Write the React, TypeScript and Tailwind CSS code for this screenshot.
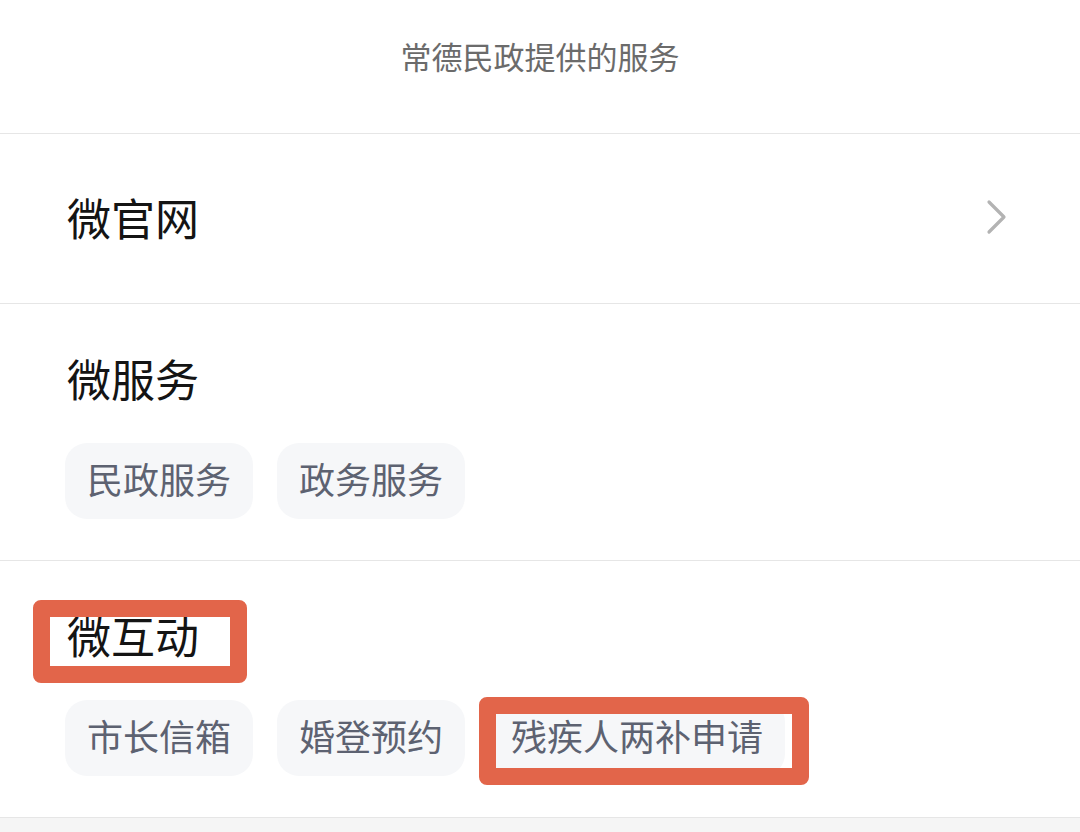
import React from 'react';

const font = { fontFamily: '"Noto Sans CJK SC", "Noto Sans", sans-serif' };

interface ChipProps {
  label: string;
  marked?: boolean;
}

function Chip({ label, marked }: ChipProps) {
  return (
    <div className="relative">
      <div className="h-[76px] px-[22px] pb-[6px] flex items-center rounded-[22px] bg-[#f6f7f9] text-[36px] leading-[36px] text-[#5d6271]">
        {label}
      </div>
      {/* annotation box */}
      {marked && (
        <div className="absolute left-[-10px] top-[-3px] w-[330px] h-[88px] border-[17px] border-[#e2654a] rounded-[8px]" />
      )}
    </div>
  );
}

interface SectionProps {
  title: string;
  items: string[];
  markedTitle?: boolean;
  markedItem?: number;
}

function Section({ title, items, markedTitle, markedItem }: SectionProps) {
  return (
    <div className="pl-[67px] pr-[72px] pt-[52px] pb-[41px] border-b border-[#e6e6e6]">
      <div className="relative w-fit">
        <h2 className="text-[44px] leading-[44px] text-[#141414] font-normal">{title}</h2>
        {markedTitle && (
          <div className="absolute left-[-34px] top-[-13px] w-[214px] h-[83px] border-[17px] border-[#e2654a] rounded-[8px]" />
        )}
      </div>
      <div className="mt-[43px] flex gap-[24px] ml-[-2px]">
        {items.map((item, i) => (
          <Chip key={item} label={item} marked={markedItem === i} />
        ))}
      </div>
    </div>
  );
}

export default function App() {
  return (
    <div className="w-[1080px] h-[832px] bg-white flex flex-col overflow-hidden" style={font}>
      {/* Header */}
      <div className="h-[134px] pt-[40px] border-b border-[#e6e6e6] text-center text-[31px] leading-[32px] text-[#6b6b6b]">
        常德民政提供的服务
      </div>

      {/* 微官网 */}
      <div className="h-[170px] pl-[67px] pr-[72px] pb-[4px] flex items-center justify-between border-b border-[#e6e6e6]">
        <span className="text-[44px] leading-[44px] text-[#141414]">微官网</span>
        <svg width="22" height="36" viewBox="0 0 22 36" fill="none">
          <path d="M3 3L18 18L3 33" stroke="#b3b3b3" strokeWidth="3.2" strokeLinecap="round" strokeLinejoin="round" />
        </svg>
      </div>

      <Section title="微服务" items={['民政服务', '政务服务']} />
      <Section title="微互动" items={['市长信箱', '婚登预约', '残疾人两补申请']} markedTitle markedItem={2} />

      <div className="flex-1 bg-[#f5f5f5]" />
    </div>
  );
}
